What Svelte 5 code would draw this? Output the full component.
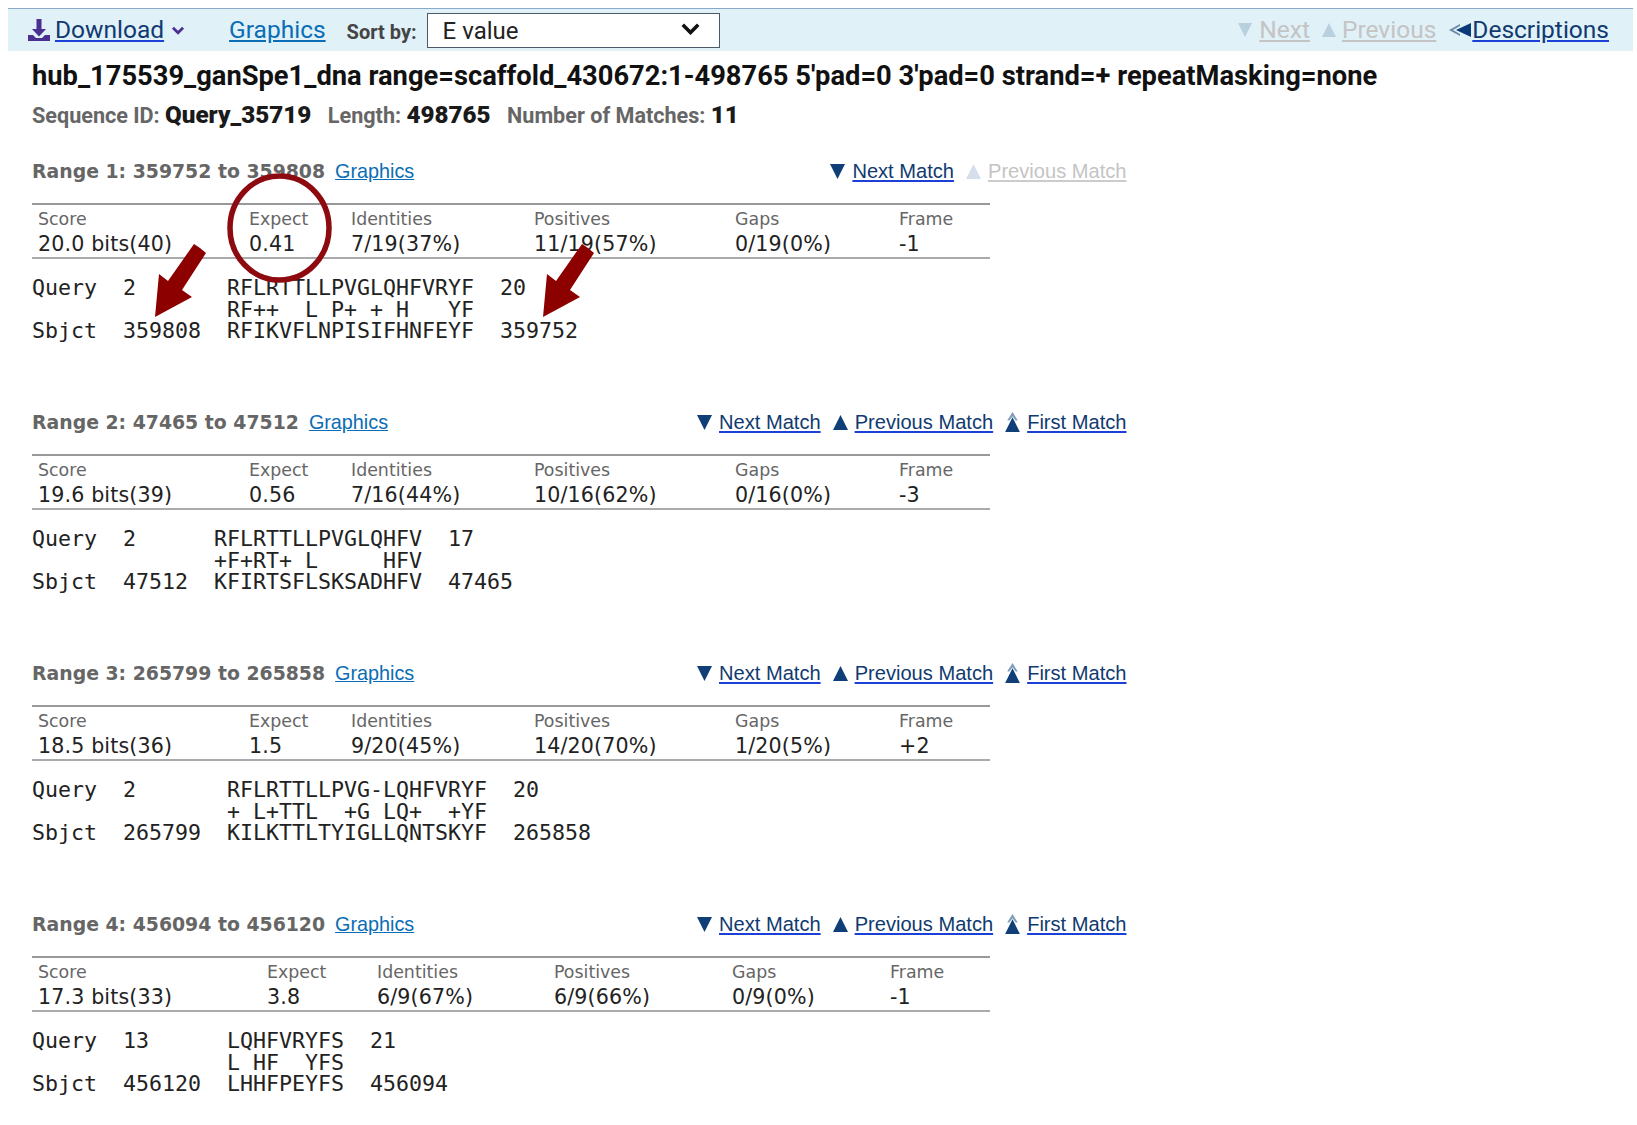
<script>
  const ranges = [
    { n: 1, from: 359752, to: 359808, first: true, cols: '211px 102px 183px 201px 164px 90px',
      stats: ['20.0 bits(40)', '0.41', '7/19(37%)', '11/19(57%)', '0/19(0%)', '-1'],
      lines: ['Query  2       RFLRTTLLPVGLQHFVRYF  20', '               RF++  L P+ + H   YF', 'Sbjct  359808  RFIKVFLNPISIFHNFEYF  359752'] },
    { n: 2, from: 47465, to: 47512, cols: '211px 102px 183px 201px 164px 90px',
      stats: ['19.6 bits(39)', '0.56', '7/16(44%)', '10/16(62%)', '0/16(0%)', '-3'],
      lines: ['Query  2      RFLRTTLLPVGLQHFV  17', '              +F+RT+ L     HFV', 'Sbjct  47512  KFIRTSFLSKSADHFV  47465'] },
    { n: 3, from: 265799, to: 265858, cols: '211px 102px 183px 201px 164px 90px',
      stats: ['18.5 bits(36)', '1.5', '9/20(45%)', '14/20(70%)', '1/20(5%)', '+2'],
      lines: ['Query  2       RFLRTTLLPVG-LQHFVRYF  20', '               + L+TTL  +G LQ+  +YF', 'Sbjct  265799  KILKTTLTYIGLLQNTSKYF  265858'] },
    { n: 4, from: 456094, to: 456120, cols: '229px 110px 177px 178px 158px 90px',
      stats: ['17.3 bits(33)', '3.8', '6/9(67%)', '6/9(66%)', '0/9(0%)', '-1'],
      lines: ['Query  13      LQHFVRYFS  21', '               L HF  YFS', 'Sbjct  456120  LHHFPEYFS  456094'] }
  ];
  const labels = ['Score', 'Expect', 'Identities', 'Positives', 'Gaps', 'Frame'];
</script>

<div class="page">
  <nav class="toolbar">
    <div class="tool-left">
      <svg class="dl" viewBox="0 0 24 24" width="24" height="24">
        <path d="M9.5 1h5v10h4.5l-7 7.5-7-7.5h4.5z" fill="#4b2f91" />
        <path d="M1 17h5l3 3h6l3-3h5v6H1z" fill="#4b2f91" />
      </svg>
      <a href="#d" class="t-link dark">Download</a>
      <svg class="caret" viewBox="0 0 12 8" width="14" height="9"><path d="M1.5 1.5 6 6l4.5-4.5" fill="none" stroke="#4b2f91" stroke-width="2.4" /></svg>
      <a href="#g" class="t-link blue graphics">Graphics</a>
      <span class="sort">Sort by:</span>
      <div class="select">
        <span class="sel-text">E value</span>
        <svg viewBox="0 0 16 10" width="19" height="12"><path d="M1.5 1.5 8 8l6.5-6.5" fill="none" stroke="#111" stroke-width="3" /></svg>
      </div>
    </div>
    <div class="tool-right">
      <svg viewBox="0 0 14 14" width="14" height="14"><path d="M0 0h14L7 14z" fill="#b9d0de" /></svg>
      <a href="#n" class="t-link off">Next</a>
      <svg class="pv" viewBox="0 0 14 14" width="14" height="14"><path d="M0 14h14L7 0z" fill="#b9d0de" /></svg>
      <a href="#p" class="t-link off">Previous</a>
      <svg class="ds" viewBox="0 0 24 14" width="24" height="14">
        <path d="M1 7 12 1v2L5 7l7 4v2z" fill="#6d8cab" />
        <path d="M8 7 23 0v14z" fill="#0b3a78" />
      </svg>
      <a href="#s" class="t-link dark">Descriptions</a>
    </div>
  </nav>

  <h1>hub_175539_ganSpe1_dna range=scaffold_430672:1-498765 5'pad=0 3'pad=0 strand=+ repeatMasking=none</h1>
  <p class="meta">
    <span>Sequence ID: <b>Query_35719</b></span>
    <span>Length: <b>498765</b></span>
    <span>Number of Matches: <b>11</b></span>
  </p>

  {#each ranges as r}
    <section>
      <header>
        <div class="title">
          <span class="range">Range {r.n}: {r.from} to {r.to}</span>
          <a href="#g" class="graph">Graphics</a>
        </div>
        <div class="matchnav">
          <span class="item">
            <svg viewBox="0 0 14 14" width="15" height="15"><path d="M0 0h14L7 14z" fill="#0f3f76" /></svg>
            <a href="#n" class="m-link">Next Match</a>
          </span>
          <span class="item">
            <svg viewBox="0 0 14 14" width="15" height="15"><path d="M0 14h14L7 0z" fill={r.first ? '#d5dfea' : '#0f3f76'} /></svg>
            <a href="#p" class="m-link" class:off={r.first}>Previous Match</a>
          </span>
          {#if !r.first}
            <span class="item">
              <svg viewBox="0 0 14 19" width="15" height="20">
                <path d="M7 0 12 8H10L7 4 4 8H2z" fill="#7f9cba" />
                <path d="M7 5 14 19H0z" fill="#0f3f76" />
              </svg>
              <a href="#f" class="m-link">First Match</a>
            </span>
          {/if}
        </div>
      </header>

      <div class="stats" style="grid-template-columns: {r.cols}">
        {#each labels as l}<div class="lab">{l}</div>{/each}
        {#each r.stats as s}<div class="val">{s}</div>{/each}
      </div>

      <pre>{r.lines.join('\n')}</pre>
    </section>
  {/each}

  <svg class="marks" viewBox="0 0 620 170" width="620" height="170">
    <ellipse cx="279.5" cy="63" rx="49.5" ry="52" fill="none" stroke="#8c0a10" stroke-width="5.5" />
    <path d="M200 83 194 79 168 116 159 109 155 152 192 132 182 125 206 88z" fill="#8c0000" />
    <path d="M200 83 194 79 168 116 159 109 155 152 192 132 182 125 206 88z" fill="#8c0000" transform="translate(388 0)" />
  </svg>
</div>

<style>
  :global(body) {
    margin: 0;
    background: #fff;
  }
  .page {
    position: relative;
    width: 1637px;
    height: 1125px;
    padding-top: 8px;
    box-sizing: border-box;
    overflow: hidden;
    font-family: Roboto, sans-serif;
  }
  .toolbar {
    display: flex;
    justify-content: space-between;
    align-items: center;
    height: 43px;
    margin: 0 4px 0 8px;
    background: #e0f1f8;
    border-top: 1px solid #8aa9c9;
    box-sizing: border-box;
    padding: 0 24px 0 19px;
  }
  .tool-left, .tool-right {
    display: flex;
    align-items: center;
  }
  .t-link {
    font-size: 24.5px;
    margin-bottom: 2px;
  }
  .dark { color: #103a70; text-decoration-color: #1c3fd8; }
  .blue { color: #0a6db5; }
  .off { color: #c4c4c4; }
  .dl { margin-right: 4px; }
  .caret { margin-left: 7px; }
  .graphics { margin-left: 44px; }
  .sort {
    margin-left: 21px;
    font-size: 20px;
    font-weight: 700;
    color: #444;
    padding-top: 3px;
  }
  .select {
    display: flex;
    justify-content: space-between;
    align-items: center;
    box-sizing: border-box;
    width: 293px;
    height: 35px;
    margin-left: 10px;
    padding: 0 19px 0 15px;
    background: #fff;
    border: 1.5px solid #4a5a68;
    font-size: 24px;
    color: #222;
  }
  .select svg { margin-bottom: 3px; }
  .sel-text { padding-top: 2px; }
  .pv { margin-left: 12px; margin-right: 6px; }
  .tool-right svg:first-child { margin-right: 7px; }
  .ds { margin-left: 12px; }
  h1 {
    margin: 8px 0 0 32px;
    font-size: 27.3px;
    line-height: 34px;
    font-weight: 700;
    color: #111;
  }
  .meta {
    display: flex;
    gap: 16.5px;
    margin: 7px 0 23px 32px;
    font-size: 21.6px;
    line-height: 30px;
    font-weight: 700;
    color: #666;
  }
  .meta b {
    font-size: 24.2px;
    color: #1a1a1a;
  }
  section {
    width: 1094.5px;
    margin-left: 32px;
    height: 251px;
    box-sizing: border-box;
  }
  header {
    display: flex;
    justify-content: space-between;
    align-items: center;
    height: 34px;
  }
  .title { display: flex; align-items: center; gap: 10px; }
  .range {
    font-family: "DejaVu Sans", sans-serif;
    font-weight: 700;
    font-size: 18.85px;
    color: #666;
  }
  .graph {
    font-family: "Liberation Sans", sans-serif;
    font-size: 19.8px;
    color: #0a6db5;
  }
  .matchnav { display: flex; gap: 12px; align-items: center; }
  .item { display: flex; align-items: center; gap: 7px; }
  .m-link {
    font-family: "Liberation Sans", sans-serif;
    font-size: 20.1px;
    color: #103a70;
    text-decoration-color: #1c3fd8;
  }
  .m-link.off { color: #c4c4c4; text-decoration-color: #ccc; }
  .stats {
    display: grid;
    width: 958px;
    box-sizing: border-box;
    margin-top: 15px;
    height: 55.5px;
    padding: 3px 0 0 6px;
    border-top: 2px solid #999;
    border-bottom: 2px solid #aaa;
    font-family: "DejaVu Sans", sans-serif;
    align-content: start;
    grid-template-rows: 24px 24px;
  }
  .lab { font-size: 17.4px; line-height: 23px; color: #666; }
  .val { font-size: 20.6px; line-height: 24px; color: #222; letter-spacing: 0.15px; }
  pre {
    margin: 18.5px 0 0;
    font-family: "DejaVu Sans Mono", monospace;
    font-size: 21.6px;
    line-height: 21.5px;
    color: #222;
  }
  .marks {
    position: absolute;
    left: 0;
    top: 165px;
  }
</style>
